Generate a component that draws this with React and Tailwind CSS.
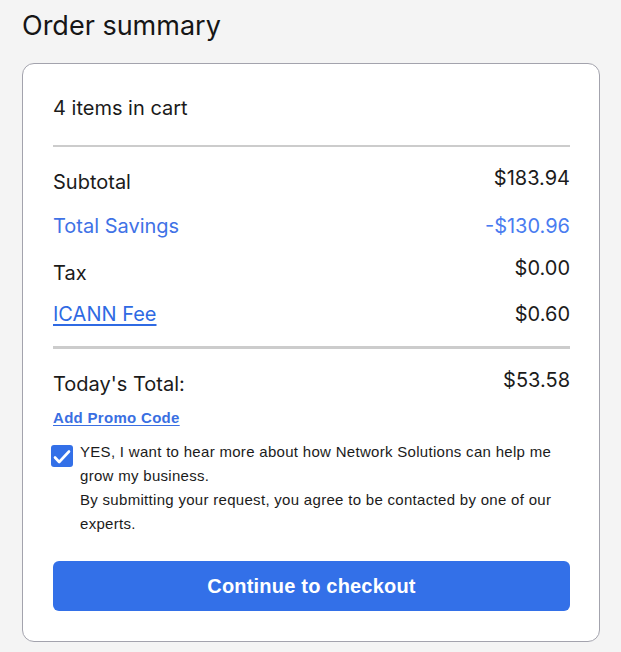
import React from "react";

const inter = "font-['Inter',sans-serif]";
const arial = "font-['Liberation_Sans',Arial,sans-serif]";

function Row({ label, amount, labelClass = "", amountClass = "", labelOffset = "", className = "" }) {
  return (
    <div className={`flex justify-between items-start ${className}`}>
      <div className={`text-[20px] leading-[28px] ${labelOffset} ${labelClass}`}>{label}</div>
      <div className={`text-[20px] leading-[28px] ${amountClass}`}>{amount}</div>
    </div>
  );
}

export default function App() {
  return (
    <div className={`min-h-[652px] bg-[#f4f4f4] pl-[22px] pr-[21px] pt-[8px] pb-[11px] text-[#1b1b1b] ${inter}`}>
      <h1 className="text-[27px] leading-[36px] font-normal mb-[19px] text-[#161616]">Order summary</h1>

      <div className="bg-white border border-[#a3a3ad] rounded-[12px] pl-[30px] pr-[29px] pt-[30px] pb-[30px]">
        <div className="text-[20px] leading-[28px]">4 items in cart</div>
        <div className="mt-[23px] h-[2px] bg-[#cccccc]" />

        <Row className="mt-[17px]" labelOffset="mt-[4px]" label="Subtotal" amount="$183.94" />
        <Row
          className="mt-[16px]"
          label="Total Savings"
          amount="-$130.96"
          labelClass="text-[#3f72e6]"
          amountClass="text-[#4a7cf0]"
        />
        <Row className="mt-[14px]" labelOffset="mt-[5px]" label="Tax" amount="$0.00" />
        <Row
          className="mt-[13px]"
          label={<a href="#" className="underline underline-offset-[3px] decoration-[2px]">ICANN Fee</a>}
          labelClass="text-[#2f6ae3]"
          amount="$0.60"
        />

        <div className="mt-[18px] h-[3px] bg-[#cccccc]" />

        <Row className="mt-[17px]" labelOffset="mt-[4px]" label="Today's Total:" amount="$53.58" />

        <div className={`mt-[8px] ${arial}`}>
          <a href="#" className="text-[15px] leading-[20px] font-bold tracking-[0.3px] text-[#3a6fe2] underline underline-offset-[2px]">
            Add Promo Code
          </a>
        </div>

        <div className={`mt-[10px] flex items-start gap-[7px] ${arial}`}>
          <div className="mt-[5px] ml-[-2px] w-[22px] h-[22px] shrink-0 rounded-[3px] bg-[#3370e8]">
            <svg width="22" height="22" viewBox="0 0 22 22" fill="none">
              <path d="M4 12.5l4.2 4.5L18 6.5" stroke="white" strokeWidth="2.6" strokeLinecap="round" strokeLinejoin="round" />
            </svg>
          </div>
          <div className="text-[15px] leading-[24px] tracking-[0.3px] text-[#1b1b1b]">
            <p>YES, I want to hear more about how Network Solutions can help me grow my business.</p>
            <p>By submitting your request, you agree to be contacted by one of our experts.</p>
          </div>
        </div>

        <button
          className={`mt-[25px] w-full h-[50px] rounded-[6px] bg-[#3370e8] text-white text-[20px] font-bold tracking-[0.2px] ${arial}`}
        >
          Continue to checkout
        </button>
      </div>
    </div>
  );
}
